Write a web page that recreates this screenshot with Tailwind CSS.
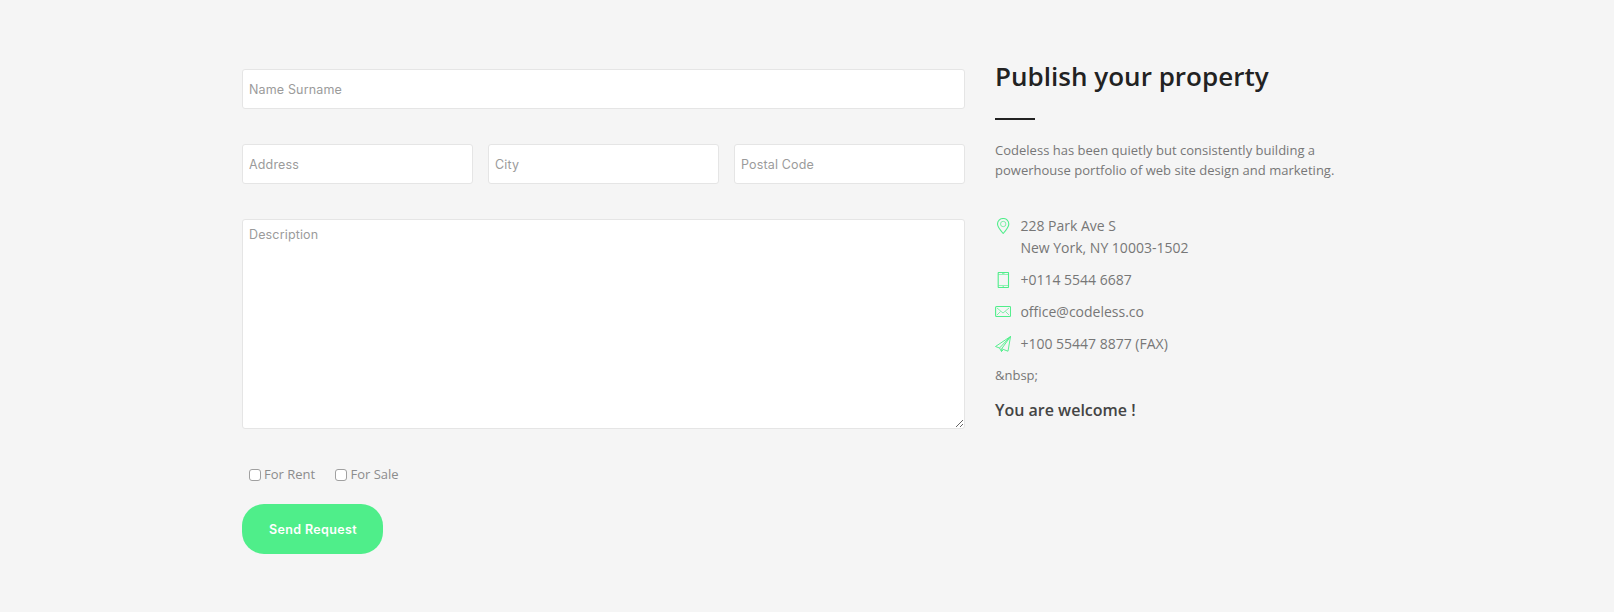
<!DOCTYPE html>
<html lang="en">
<head>
<meta charset="utf-8">
<title>Publish your property</title>
<script src="https://cdn.jsdelivr.net/npm/@tailwindcss/browser@4"></script>
</head>
<body class="bg-[#f5f5f5] min-h-screen overflow-hidden font-['Open_Sans',sans-serif] text-[13px] leading-5 text-[#777]">
<main class="flex gap-[30px] pl-[242px] pt-[69px]">
  <form class="w-[723px] flex flex-col shrink-0">
    <input type="text" placeholder="Name Surname" class="block h-10 w-full rounded-[3px] border border-[#e5e5e5] bg-white px-1.5 pt-px font-['Inter',sans-serif] text-[12.5px] tracking-[0.15px] placeholder:text-[#9b9b9b]">
    <div class="grid grid-cols-3 gap-[15px] mt-[35px]">
      <input type="text" placeholder="Address" class="h-10 min-w-0 rounded-[3px] border border-[#e5e5e5] bg-white px-1.5 pt-px font-['Inter',sans-serif] text-[12.5px] tracking-[0.15px] placeholder:text-[#9b9b9b]">
      <input type="text" placeholder="City" class="h-10 min-w-0 rounded-[3px] border border-[#e5e5e5] bg-white px-1.5 pt-px font-['Inter',sans-serif] text-[12.5px] tracking-[0.15px] placeholder:text-[#9b9b9b]">
      <input type="text" placeholder="Postal Code" class="h-10 min-w-0 rounded-[3px] border border-[#e5e5e5] bg-white px-1.5 pt-px font-['Inter',sans-serif] text-[12.5px] tracking-[0.15px] placeholder:text-[#9b9b9b]">
    </div>
    <textarea placeholder="Description" class="block mt-[35px] h-[210px] w-full resize rounded-[3px] border border-[#e5e5e5] bg-white px-1.5 pt-[5px] font-['Inter',sans-serif] text-[12.5px] leading-5 tracking-[0.15px] placeholder:text-[#9b9b9b]"></textarea>
    <div class="flex mt-9 pl-[7px] h-5 text-[#8c8c8c]">
      <label class="flex items-center gap-[3px] w-[86px]"><input type="checkbox" class="appearance-none size-3 rounded-[3px] border border-[#a0a0a0] bg-white"><span class="pb-0.5">For Rent</span></label>
      <label class="flex items-center gap-[3.500px]"><input type="checkbox" class="appearance-none size-3 rounded-[3px] border border-[#a0a0a0] bg-white"><span class="pb-0.5">For Sale</span></label>
    </div>
    <button type="button" class="mt-[19px] h-[50px] w-[141px] rounded-[22px] bg-[#4fee8a] text-white font-['Inter',sans-serif] font-semibold text-[12.5px] tracking-[0.35px] pt-px pl-px">Send Request</button>
  </form>
  <aside class="w-[370px] -mt-[10px]">
    <h2 class="text-[26px] leading-[34px] font-semibold text-[#222] tracking-[0.02px]">Publish your property</h2>
    <div class="mt-[25px] h-0.5 w-10 bg-[#222]"></div>
    <p class="mt-5 whitespace-nowrap tracking-[0.015px]">Codeless has been quietly but consistently building a<br>powerhouse portfolio of web site design and marketing.</p>
    <ul class="mt-[35px] flex flex-col gap-2.5 text-sm leading-[22px]">
      <li class="flex gap-[9.400px]"><svg class="size-4 mt-[3px] shrink-0" viewBox="0 0 16 16" fill="none" stroke="#4fee8a"><path d="M8.200.5C4.900.5 2.500 2.900 2.500 6.100 2.500 9.200 5.300 12.300 8.200 15.500 11.100 12.300 13.800 9.200 13.800 6.100 13.800 2.900 11.500.5 8.200.5Z" stroke-width="1.100"/><circle cx="8.200" cy="6" r="2.700" stroke-width=".7"/></svg><span>228 Park Ave S<br>New York, NY 10003-1502</span></li>
      <li class="flex gap-[9.400px]"><svg class="size-4 mt-[3px] shrink-0" viewBox="0 0 16 16" fill="none" stroke="#4fee8a"><rect x="3.200" y=".5" width="10.300" height="15" rx=".6" stroke-width="1.100"/><path d="M3.200 2.500H13.500M3.200 13.500H13.500M7 1.500H9.500M7.500 14.500H9" stroke-width=".6"/></svg><span>+0114 5544 6687</span></li>
      <li class="flex gap-[9.400px]"><svg class="size-4 mt-[3px] shrink-0" viewBox="0 0 16 16" fill="none" stroke="#4fee8a"><rect x=".6" y="2.500" width="15" height="10" rx="1" stroke-width="1.100"/><path d="M2 4 8 9 14 4M2 11 5.500 7.500M14 11 10.500 7.500" stroke-width=".7"/></svg><span>office@codeless.co</span></li>
      <li class="flex gap-[9.400px]"><svg class="size-4 mt-[3px] shrink-0" viewBox="0 0 16 16" fill="none" stroke="#4fee8a" stroke-width=".95" stroke-linejoin="round"><path d="M15.500.5.5 10.500 4.500 12 6.500 15.500 8.500 13.500 13 15.200ZM4.500 12 15.500.5 6.800 12.600 6.500 15.500M6.800 12.600 8.500 13.500"/></svg><span>+100 55447 8877 (FAX)</span></li>
    </ul>
    <p class="mt-[10px]">&amp;nbsp;</p>
    <h4 class="mt-[14px] text-base leading-[22px] font-semibold text-[#444]">You are welcome !</h4>
  </aside>
</main>
</body>
</html>
